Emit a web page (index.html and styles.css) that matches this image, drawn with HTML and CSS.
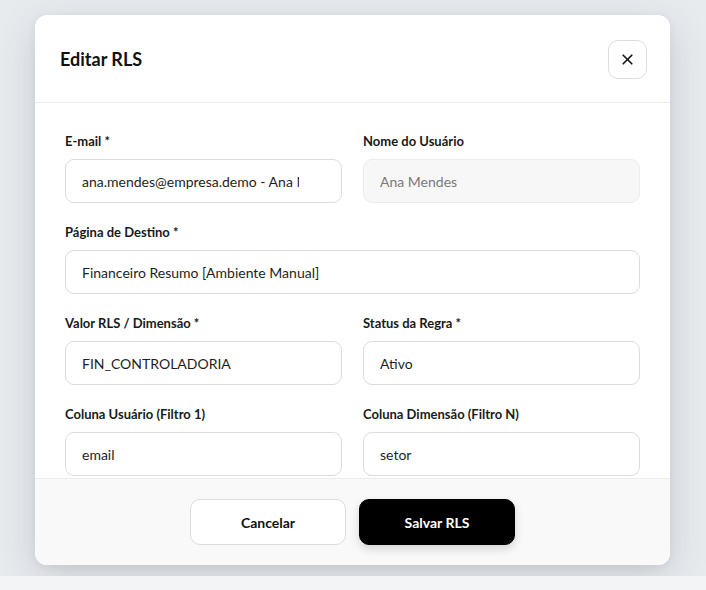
FILE: index.html
```html
<!DOCTYPE html>
<html lang="pt-BR">
<head>
<meta charset="utf-8">
<title>Editar RLS</title>
<link rel="stylesheet" href="styles.css">
</head>
<body>
<div class="overlay">
  <div class="modal">
    <div class="modal-header">
      <h2 class="modal-title">Editar RLS</h2>
      <button class="close-btn" type="button" aria-label="Fechar">
        <svg width="11" height="11" viewBox="0 0 11 11"><path d="M1.2 1.2L9.8 9.8M9.8 1.2L1.2 9.8" stroke="#111" stroke-width="1.6" stroke-linecap="round"/></svg>
      </button>
    </div>
    <div class="modal-body">
      <div class="form-grid">
        <div class="field">
          <label class="field-label">E-mail *</label>
          <input class="field-input email-input" type="text" value="ana.mendes@empresa.demo - Ana Mendes">
        </div>
        <div class="field">
          <label class="field-label">Nome do Usuário</label>
          <input class="field-input is-disabled" type="text" value="Ana Mendes" disabled>
        </div>
        <div class="field span-2">
          <label class="field-label">Página de Destino *</label>
          <input class="field-input" type="text" value="Financeiro Resumo [Ambiente Manual]">
        </div>
        <div class="field">
          <label class="field-label">Valor RLS / Dimensão *</label>
          <input class="field-input" type="text" value="FIN_CONTROLADORIA">
        </div>
        <div class="field">
          <label class="field-label">Status da Regra *</label>
          <input class="field-input" type="text" value="Ativo">
        </div>
        <div class="field">
          <label class="field-label">Coluna Usuário (Filtro 1)</label>
          <input class="field-input" type="text" value="email">
        </div>
        <div class="field">
          <label class="field-label">Coluna Dimensão (Filtro N)</label>
          <input class="field-input" type="text" value="setor">
        </div>
      </div>
    </div>
    <div class="modal-footer">
      <button class="btn btn-secondary" type="button">Cancelar</button>
      <button class="btn btn-primary" type="button">Salvar RLS</button>
    </div>
  </div>
</div>
</body>
</html>
```
FILE: styles.css
```css
* { box-sizing: border-box; }
html, body {
  margin: 0;
  padding: 0;
  background: #f3f4f6;
  font-family: Lato, "Noto Sans", "Liberation Sans", sans-serif;
  color: #1a1a1a;
}
.overlay {
  height: 576px;
  background: #e8ebee;
  display: flex;
  justify-content: flex-start;
  align-items: flex-start;
  padding: 15px 0 0 35px;
}
.modal {
  width: 635px;
  height: 550px;
  background: #fff;
  border-radius: 12px;
  box-shadow: 0 12px 40px rgba(30, 40, 60, 0.16), 0 2px 8px rgba(30, 40, 60, 0.06);
  display: flex;
  flex-direction: column;
  overflow: hidden;
}
.modal-header {
  display: flex;
  align-items: center;
  justify-content: space-between;
  padding: 24px 23px 23px 25px;
  border-bottom: 1px solid #ececec;
  flex: none;
}
.modal-title {
  margin: 0;
  font-size: 18px;
  font-weight: 700;
  color: #111;
}
.close-btn {
  width: 39px;
  height: 39px;
  border: 1px solid #dddddd;
  border-radius: 10px;
  background: #fff;
  display: flex;
  align-items: center;
  justify-content: center;
  padding: 0;
  margin-top: 1px;
}
.modal-body {
  flex: 1;
  overflow: hidden;
  padding: 30px 30px;
}
.form-grid {
  display: grid;
  grid-template-columns: 1fr 1fr;
  column-gap: 21px;
  row-gap: 21px;
}
.span-2 { grid-column: span 2; }
.field {
  display: flex;
  flex-direction: column;
}
.field-label {
  font-size: 13px;
  font-weight: 700;
  line-height: 16px;
  margin-bottom: 10px;
  color: #1a1a1a;
}
.field-input {
  height: 44px;
  border: 1px solid #dcdcdc;
  border-radius: 9px;
  padding: 0 16px;
  font-family: inherit;
  font-size: 14px;
  color: #1e1e1e;
  background: #fff;
  outline: none;
}
.email-input { padding-right: 42px; }
.field-input.is-disabled {
  background: #f7f7f7;
  color: #7a7a7a;
  border-color: #ececec;
}
.modal-footer {
  flex: none;
  height: 87px;
  background: #f9f9f9;
  border-top: 1px solid #ececec;
  display: flex;
  justify-content: center;
  align-items: center;
  gap: 13px;
}
.btn {
  width: 156px;
  height: 46px;
  border-radius: 10px;
  font-family: inherit;
  font-size: 14px;
  font-weight: 700;
}
.btn-secondary {
  background: #fff;
  color: #111;
  border: 1px solid #dcdcdc;
}
.btn-primary {
  background: #000;
  color: #fff;
  border: 1px solid #000;
  box-shadow: 0 4px 10px rgba(0, 0, 0, 0.15);
}
```
